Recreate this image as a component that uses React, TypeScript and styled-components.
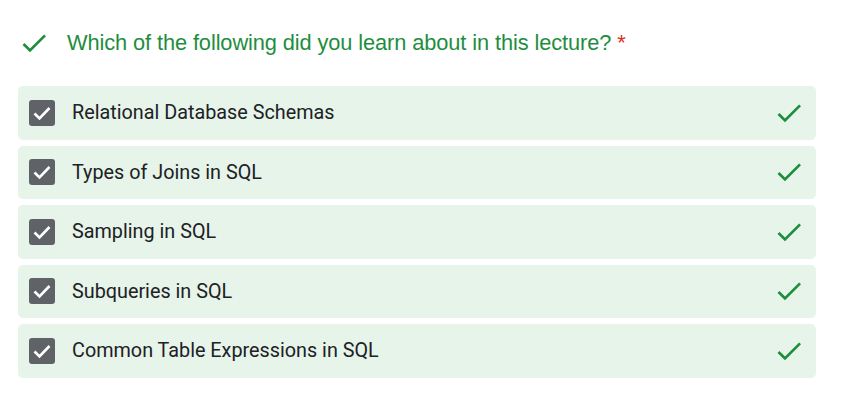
import React from "react";
import styled, { createGlobalStyle } from "styled-components";

const Global = createGlobalStyle`
  html, body { margin: 0; padding: 0; background: #ffffff; }
  body { font-family: Roboto, "Liberation Sans", sans-serif; }
`;

const Page = styled.div`
  width: 843px;
  height: 414px;
  box-sizing: border-box;
  padding: 27px 27px 0 18px;
  display: flex;
  flex-direction: column;
`;

const Header = styled.div`
  display: flex;
  align-items: center;
  height: 32px;
  gap: 17px;
  margin-bottom: 27px;
`;

const Title = styled.div`
  font-family: "Liberation Sans", Arial, sans-serif;
  font-size: 21.8px;
  color: #1e8e3e;
  letter-spacing: -0.1px;
`;

const Required = styled.span`
  color: #d93025;
  margin-left: 6px;
`;

const List = styled.div`
  display: flex;
  flex-direction: column;
  gap: 6px;
`;

const Row = styled.div`
  display: flex;
  align-items: center;
  height: 53.5px;
  box-sizing: border-box;
  padding: 0 11px 0 11px;
  background: #e6f4ea;
  border-radius: 5px;
`;

const Box = styled.div`
  width: 26px;
  height: 26px;
  border-radius: 3px;
  background: #5f6368;
  display: flex;
  align-items: center;
  justify-content: center;
  flex-shrink: 0;
`;

const Label = styled.div`
  flex: 1;
  margin-left: 17px;
  font-family: Roboto, sans-serif;
  font-size: 19.8px;
  color: #202124;
`;

const CheckIcon = ({ size = 32, color = "#1e8e3e" }: { size?: number; color?: string }) => (
  <svg width={size} height={size} viewBox="0 0 24 24" style={{ flexShrink: 0, display: "block" }}>
    <path fill={color} d="M9 16.17L4.83 12l-1.42 1.41L9 19 21 7l-1.41-1.41z" />
  </svg>
);

const items = [
  "Relational Database Schemas",
  "Types of Joins in SQL",
  "Sampling in SQL",
  "Subqueries in SQL",
  "Common Table Expressions in SQL",
];

export default function App() {
  return (
    <>
      <Global />
      <Page>
        <Header>
          <CheckIcon />
          <Title>
            Which of the following did you learn about in this lecture?
            <Required>*</Required>
          </Title>
        </Header>
        <List>
          {items.map((t) => (
            <Row key={t}>
              <Box>
                <svg width="26" height="26" viewBox="0 0 26 26">
                  <polyline
                    points="5.5,13.5 10.5,18.5 20.5,8"
                    fill="none"
                    stroke="#fff"
                    strokeWidth="2.6"
                  />
                </svg>
              </Box>
              <Label>{t}</Label>
              <CheckIcon />
            </Row>
          ))}
        </List>
      </Page>
    </>
  );
}
